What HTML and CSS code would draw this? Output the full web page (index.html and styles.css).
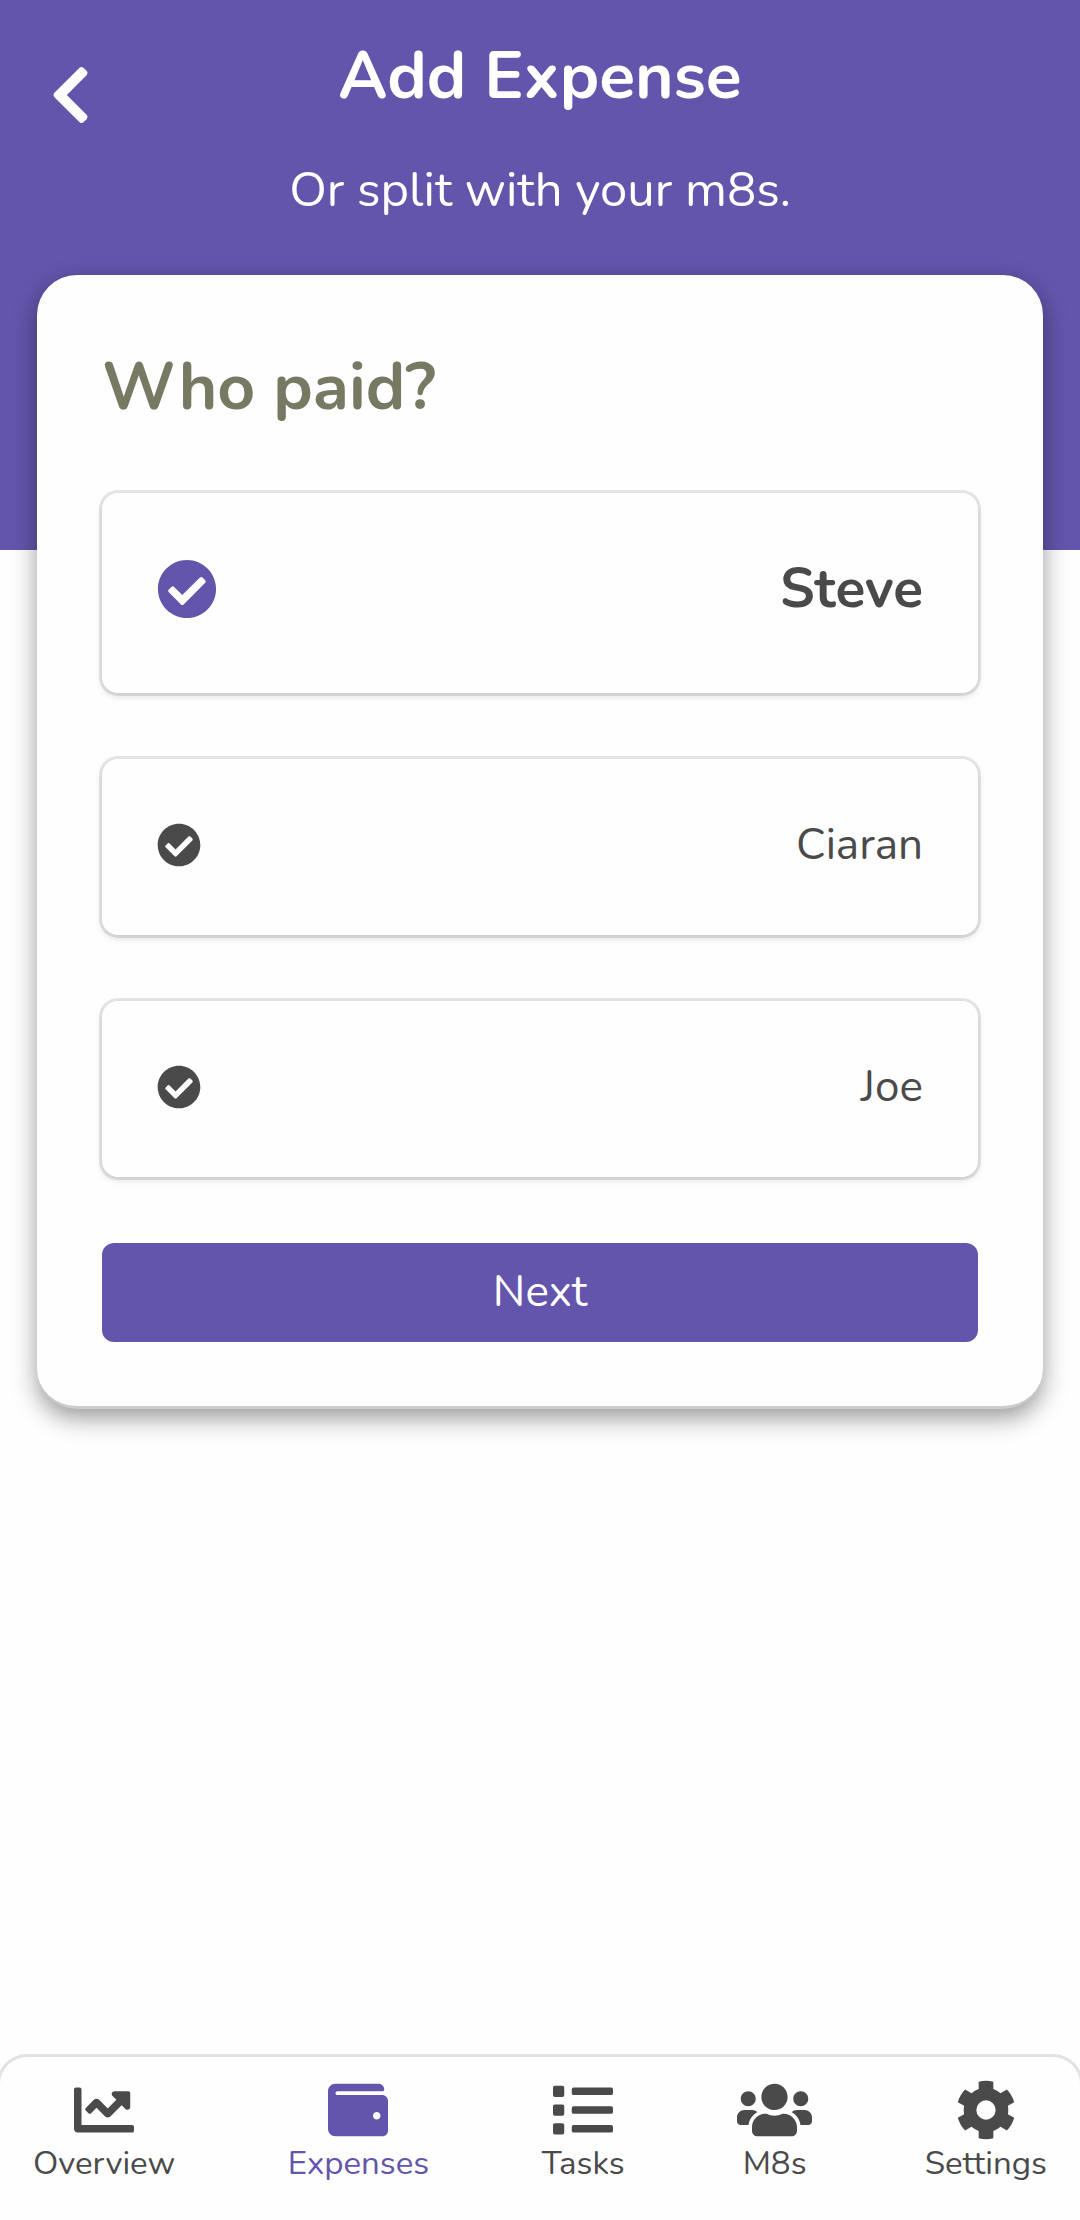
FILE: index.html
```html
<!DOCTYPE html>
<html lang="en">
<head>
<meta charset="UTF-8" />
<meta name="viewport" content="width=device-width, initial-scale=1" />
<title>Add Expense</title>
<link rel="stylesheet" href="styles.css">
</head>
<body>

<!-- Icons -->
<svg class="sprite" aria-hidden="true">
  <symbol id="icon-check" viewBox="0 0 512 512">
    <path d="M504 256c0 136.967-111.033 248-248 248S8 392.967 8 256 119.033 8 256 8s248 111.033 248 248zM227.314 387.314l184-184c6.248-6.248 6.248-16.379 0-22.627l-22.627-22.627c-6.248-6.249-16.379-6.249-22.628 0L216 308.118l-70.059-70.059c-6.248-6.248-16.379-6.248-22.628 0l-22.627 22.627c-6.248 6.248-6.248 16.379 0 22.627l104 104c6.249 6.249 16.379 6.249 22.628.001z"/>
  </symbol>
</svg>

<!-- Header -->
<header class="header">
  <button class="backBtn" type="button" aria-label="Back">
    <svg class="backIcon" viewBox="0 0 320 512"><path d="M34.52 239.03L228.87 44.69c9.37-9.37 24.57-9.37 33.94 0l22.67 22.67c9.36 9.36 9.37 24.52.04 33.9L131.49 256l154.02 154.75c9.34 9.38 9.32 24.54-.04 33.9l-22.67 22.67c-9.37 9.37-24.57 9.37-33.94 0L34.52 272.97c-9.37-9.37-9.37-24.57 0-33.94z"/></svg>
  </button>
  <div class="titles">
    <h1>Add Expense</h1>
    <p>Or split with your m8s.</p>
  </div>
</header>

<!-- Who paid -->
<main class="content">
  <form class="card">
    <h2 id="whoPaid">Who paid?</h2>
    <div class="options" role="radiogroup" aria-labelledby="whoPaid">
      <label class="option">
        <input type="radio" name="payer" value="steve" checked />
        <svg class="check"><use href="#icon-check"/></svg>
        <span>Steve</span>
      </label>
      <label class="option">
        <input type="radio" name="payer" value="ciaran" />
        <svg class="check"><use href="#icon-check"/></svg>
        <span>Ciaran</span>
      </label>
      <label class="option">
        <input type="radio" name="payer" value="joe" />
        <svg class="check"><use href="#icon-check"/></svg>
        <span>Joe</span>
      </label>
    </div>
    <button class="nextBtn" type="button">Next</button>
  </form>
</main>

<!-- Tab bar -->
<nav class="tabs">
  <a class="tab" href="#overview">
    <svg viewBox="0 0 512 512"><path d="M496 384H64V80c0-8.84-7.16-16-16-16H16C7.16 64 0 71.16 0 80v336c0 17.67 14.33 32 32 32h464c8.84 0 16-7.16 16-16v-32c0-8.84-7.16-16-16-16zM464 96H345.94c-21.38 0-32.09 25.85-16.97 40.97l32.4 32.4L288 242.75l-73.37-73.37c-12.5-12.5-32.76-12.5-45.25 0l-68.69 68.69c-6.25 6.25-6.25 16.38 0 22.63l22.62 22.62c6.25 6.25 16.38 6.25 22.63 0L192 237.25l73.37 73.37c12.5 12.5 32.76 12.5 45.25 0l96-96 32.4 32.4c15.12 15.12 40.97 4.41 40.97-16.97V112c.01-8.84-7.15-16-15.99-16z"/></svg>
    Overview
  </a>
  <a class="tab active" href="#expenses" aria-current="page">
    <svg viewBox="0 0 512 512"><path d="M461.2 128H80c-8.84 0-16-7.16-16-16s7.16-16 16-16h384c8.84 0 16-7.16 16-16 0-26.51-21.49-48-48-48H64C28.65 32 0 60.65 0 96v320c0 35.35 28.65 64 64 64h397.2c28.02 0 50.8-21.53 50.8-48V176c0-26.47-22.78-48-50.8-48zM416 336c-17.67 0-32-14.33-32-32s14.33-32 32-32 32 14.33 32 32-14.33 32-32 32z"/></svg>
    Expenses
  </a>
  <a class="tab" href="#tasks">
    <svg viewBox="0 0 512 512"><path d="M80 368H16a16 16 0 0 0-16 16v64a16 16 0 0 0 16 16h64a16 16 0 0 0 16-16v-64a16 16 0 0 0-16-16zm0-320H16A16 16 0 0 0 0 64v64a16 16 0 0 0 16 16h64a16 16 0 0 0 16-16V64a16 16 0 0 0-16-16zm0 160H16a16 16 0 0 0-16 16v64a16 16 0 0 0 16 16h64a16 16 0 0 0 16-16v-64a16 16 0 0 0-16-16zm416 176H176a16 16 0 0 0-16 16v32a16 16 0 0 0 16 16h320a16 16 0 0 0 16-16v-32a16 16 0 0 0-16-16zm0-320H176a16 16 0 0 0-16 16v32a16 16 0 0 0 16 16h320a16 16 0 0 0 16-16V80a16 16 0 0 0-16-16zm0 160H176a16 16 0 0 0-16 16v32a16 16 0 0 0 16 16h320a16 16 0 0 0 16-16v-32a16 16 0 0 0-16-16z"/></svg>
    Tasks
  </a>
  <a class="tab" href="#m8s">
    <svg viewBox="0 0 640 512"><path d="M96 224c35.3 0 64-28.7 64-64s-28.7-64-64-64-64 28.7-64 64 28.7 64 64 64zm448 0c35.3 0 64-28.7 64-64s-28.7-64-64-64-64 28.7-64 64 28.7 64 64 64zm32 32h-64c-17.6 0-33.5 7.1-45.1 18.6 40.3 22.1 68.9 62 75.1 109.4h66c17.7 0 32-14.3 32-32v-32c0-35.3-28.7-64-64-64zm-256 0c61.9 0 112-50.1 112-112S381.9 32 320 32 208 82.1 208 144s50.1 112 112 112zm76.8 32h-8.3c-20.8 10-43.9 16-68.5 16s-47.6-6-68.5-16h-8.3C179.6 288 128 339.6 128 403.2V432c0 26.5 21.5 48 48 48h288c26.5 0 48-21.5 48-48v-28.8c0-63.6-51.6-115.2-115.2-115.2zm-223.7-13.4C161.5 263.1 145.6 256 128 256H64c-35.3 0-64 28.7-64 64v32c0 17.7 14.3 32 32 32h65.9c6.3-47.4 34.9-87.3 75.2-109.4z"/></svg>
    M8s
  </a>
  <a class="tab" href="#settings">
    <svg viewBox="-90 -90 180 180"><path fill-rule="evenodd" d="M-22-85A88 88 0 0 1 22-85L22-63A67 67 0 0 1 43.6-50.6L62.6-61.5A88 88 0 0 1 84.6-23.4L65.6-12.5A67 67 0 0 1 65.6 12.5L84.6 23.4A88 88 0 0 1 62.6 61.5L43.6 50.6A67 67 0 0 1 22 63L22 85A88 88 0 0 1-22 85L-22 63A67 67 0 0 1-43.6 50.6L-62.6 61.5A88 88 0 0 1-84.6 23.4L-65.6 12.5A67 67 0 0 1-65.6-12.5L-84.6-23.4A88 88 0 0 1-62.6-61.5L-43.6-50.6A67 67 0 0 1-22-63zM29 0A29 29 0 1 0-29 0A29 29 0 1 0 29 0z"/></svg>
    Settings
  </a>
</nav>

</body>
</html>
```
FILE: styles.css
```css
* {
  box-sizing: border-box;
}
body {
  font-family: Nunito, Lato, sans-serif;
  margin: 0;
  min-height: 100vh;
  display: flex;
  flex-direction: column;
  overflow-x: clip;
  background: #fefefe;
  color: #4a4a4a;
}
svg {
  display: block;
  fill: currentColor;
}
h1, h2, p {
  margin: 0;
}
.sprite {
  display: none;
}

/* Header */
.header {
  display: grid;
  grid-template-columns: 48px 1fr 48px;
  align-items: start;
  padding: 36px 50px 328px;
  background: #6355ac;
  color: white;
  text-align: center;
}
.backBtn {
  margin: 26px 0 0;
  padding: 0;
  border: none;
  background: none;
  color: inherit;
  cursor: pointer;
}
.backIcon {
  width: 41px;
  height: 66px;
}
.titles h1 {
  font-size: 66px;
  line-height: 80px;
}
.titles p {
  margin-top: 42px;
  font-size: 49px;
  line-height: 64px;
}

/* Card */
.content {
  flex: 1;
  margin-top: -275px;
  padding: 0 37px 64px;
}
.card {
  padding: 64px 65px;
  background: #fefefe;
  border-bottom: 3px solid #ccc;
  border-radius: 40px;
  box-shadow: 0 9px 24px rgba(0, 0, 0, .4);
}
.card h2 {
  margin-bottom: 58px;
  font-size: 66px;
  line-height: 96px;
  color: #777962;
}

/* Options */
.options {
  display: grid;
  gap: 66px;
}
.option {
  display: flex;
  align-items: center;
  justify-content: space-between;
  padding: 58px 55px 62px;
  border-radius: 16px;
  box-shadow: 0 0 0 3px rgba(0, 0, 0, .09), 0 3px 9px rgba(0, 0, 0, .1), 0 3px 6px rgba(0, 0, 0, .04);
  font-size: 44px;
  line-height: 56px;
  cursor: pointer;
}
.option input {
  position: absolute;
  opacity: 0;
}
.check {
  width: 44px;
  height: 44px;
}
.option:has(input:checked) {
  padding-top: 56px;
  padding-bottom: 64px;
  font-size: 55px;
  font-weight: bold;
  line-height: 80px;
}
input:checked + .check {
  width: 60px;
  height: 60px;
  color: #6355ac;
}
.nextBtn {
  width: 100%;
  margin-top: 66px;
  padding: 20px;
  border: none;
  border-radius: 12px;
  background: #6355ac;
  color: white;
  font-family: inherit;
  font-size: 44px;
  line-height: 59px;
  cursor: pointer;
}

/* Tab bar */
.tabs {
  display: flex;
  justify-content: space-between;
  margin: 0 -3px;
  padding: 23px 33px 34px;
  border: 3px solid #e2e2e2;
  border-bottom: none;
  border-radius: 30px 30px 0 0;
}
.tab {
  display: flex;
  flex-direction: column;
  align-items: center;
  gap: 2px;
  color: inherit;
  font-size: 33px;
  line-height: 44px;
  text-decoration: none;
}
.tab svg {
  height: 60px;
}
.tab.active {
  color: #6355ac;
}
```
